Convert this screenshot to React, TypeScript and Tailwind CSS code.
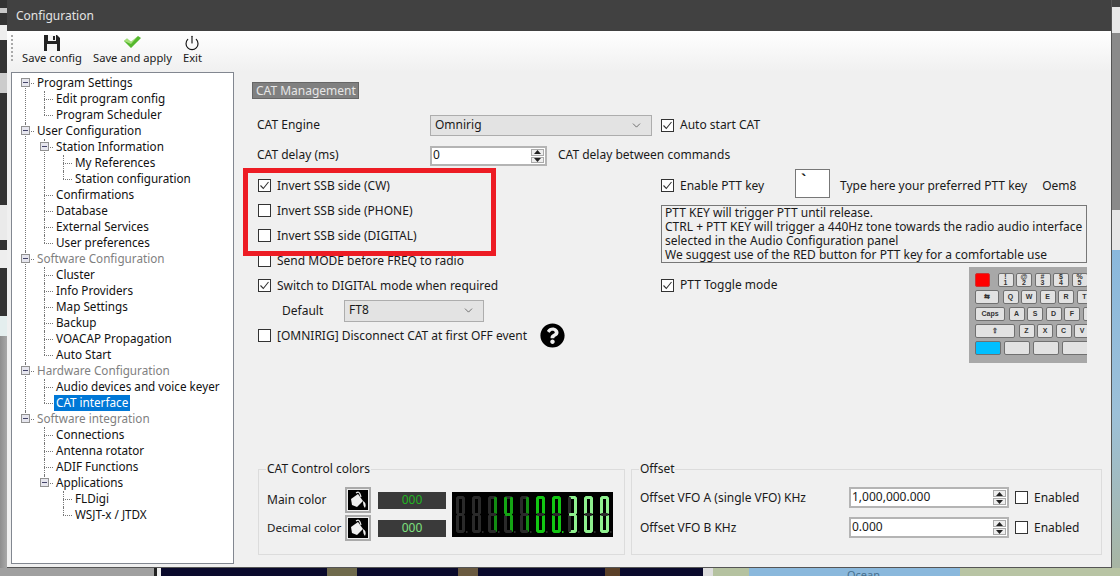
import { ChevronDown, Power } from 'lucide-react';
import { FaQuestionCircle } from 'react-icons/fa';

interface TreeItem {
  label: string;
  muted?: boolean;
  selected?: boolean;
  children?: TreeItem[];
}

const tree: TreeItem[] = [
  {
    label: 'Program Settings',
    children: [{ label: 'Edit program config' }, { label: 'Program Scheduler' }],
  },
  {
    label: 'User Configuration',
    children: [
      {
        label: 'Station Information',
        children: [{ label: 'My References' }, { label: 'Station configuration' }],
      },
      { label: 'Confirmations' },
      { label: 'Database' },
      { label: 'External Services' },
      { label: 'User preferences' },
    ],
  },
  {
    label: 'Software Configuration',
    muted: true,
    children: [
      { label: 'Cluster' },
      { label: 'Info Providers' },
      { label: 'Map Settings' },
      { label: 'Backup' },
      { label: 'VOACAP Propagation' },
      { label: 'Auto Start' },
    ],
  },
  {
    label: 'Hardware Configuration',
    muted: true,
    children: [{ label: 'Audio devices and voice keyer' }, { label: 'CAT interface', selected: true }],
  },
  {
    label: 'Software integration',
    muted: true,
    children: [
      { label: 'Connections' },
      { label: 'Antenna rotator' },
      { label: 'ADIF Functions' },
      {
        label: 'Applications',
        children: [{ label: 'FLDigi' }, { label: 'WSJT-x / JTDX' }],
      },
    ],
  },
];

function TreeNode({ item, first, last }: { item: TreeItem; first?: boolean; last?: boolean }) {
  return (
    <div className="relative">
      <span
        className={`absolute left-[13px] border-l border-dotted border-[#777] ${first ? 'top-2' : 'top-0'} ${last ? 'h-2' : 'bottom-0'}`}
      />
      <div className="relative flex h-4 items-center">
        <span className="absolute left-[13px] top-2 w-[9px] border-t border-dotted border-[#777]" />
        {item.children && (
          <span className="absolute left-[9px] top-[3px] z-10 flex size-[9px] items-center justify-center border border-[#919191] bg-[#e6e6ee]">
            <span className="h-px w-[5px] bg-[#45456a]" />
          </span>
        )}
        <span
          className={`relative ml-[23px] px-[2px] pb-[2px] leading-[14px] ${item.selected ? 'bg-[#0078d7] text-white' : item.muted ? 'text-[#7f7f7f]' : 'text-[#111]'}`}
        >
          {item.label}
        </span>
      </div>
      {item.children && (
        <div className="ml-[19px]">
          {item.children.map((child, i) => (
            <TreeNode key={child.label} item={child} last={i === item.children!.length - 1} />
          ))}
        </div>
      )}
    </div>
  );
}

function Checkbox({ checked }: { checked?: boolean }) {
  return (
    <span className="flex size-[13px] shrink-0 items-center justify-center border border-[#333] bg-white">
      {checked && (
        <svg width="11" height="11" viewBox="0 0 11 11" fill="none">
          <path d="M1.5 5.5 L4.3 8.5 L9.5 2" stroke="#333" strokeWidth="1.1" />
        </svg>
      )}
    </span>
  );
}

function CheckRow({ label, checked }: { label: string; checked?: boolean }) {
  return (
    <div className="flex h-[25px] items-center gap-[6px] pl-[6px]">
      <Checkbox checked={checked} />
      <span className="whitespace-nowrap">{label}</span>
    </div>
  );
}

function SpinBox({ value, className }: { value: string; className: string }) {
  return (
    <div className={`flex shrink-0 items-center border-2 border-[#b4b4b4] bg-white pl-[1px] ${className}`}>
      <span className="flex-1 pb-[2px]">{value}</span>
      <div className="mr-[1px] flex h-full flex-col justify-center gap-[1px] py-[1px]">
        <span className="flex h-[7px] w-[13px] items-center justify-center border border-[#aaa] bg-[#eee]">
          <svg width="7" height="4" viewBox="0 0 7 4">
            <path d="M3.5 0 L7 4 L0 4 Z" fill="#222" />
          </svg>
        </span>
        <span className="flex h-[7px] w-[13px] items-center justify-center border border-[#aaa] bg-[#eee]">
          <svg width="7" height="4" viewBox="0 0 7 4">
            <path d="M0 0 L7 0 L3.5 4 Z" fill="#222" />
          </svg>
        </span>
      </div>
    </div>
  );
}

function ComboBox({ value, className }: { value: string; className: string }) {
  return (
    <div className={`flex shrink-0 items-center justify-between border border-[#adadad] bg-[#e3e3e3] pl-1 pr-2 ${className}`}>
      <span className="pb-[2px]">{value}</span>
      <ChevronDown size={13} strokeWidth={1.1} color="#222" />
    </div>
  );
}

function BucketButton() {
  return (
    <span className="flex size-[26px] shrink-0 items-center justify-center border-2 border-[#aaa] bg-[#eee]">
      <svg width="20" height="20" viewBox="0 0 20 20">
        <rect width="20" height="20" fill="#000" />
        <path d="M3 9 L10 4 L15 11 L9 17 L4 15 Z" fill="#eee" />
        <path d="M8 3 Q11 1 12 4 L13 7" fill="none" stroke="#eee" strokeWidth="1.2" />
        <path d="M15 11 Q19 13 17 18 Q15 16 15 11 Z" fill="#eee" />
      </svg>
    </span>
  );
}

const segments: Record<string, string> = {
  '0': 'abcdef',
  '1': 'bc',
  '3': 'abcdg',
  '4': 'bcfg',
  ' ': '',
};

const displayDigits: { ch: string; color: string }[] = [
  { ch: ' ', color: '#2a2a2a' },
  { ch: ' ', color: '#2a2a2a' },
  { ch: '1', color: '#128c12' },
  { ch: '4', color: '#14a514' },
  { ch: '1', color: '#128c12' },
  { ch: '0', color: '#12c512' },
  { ch: '0', color: '#12c512' },
  { ch: '3', color: '#8ff08f' },
  { ch: '0', color: '#8ff08f' },
  { ch: '0', color: '#8ff08f' },
];

function SegmentDisplay() {
  const rects: Record<string, [number, number, number, number]> = {
    a: [1, 0, 7, 3],
    b: [6, 1, 3, 17],
    c: [6, 19, 3, 17],
    d: [1, 34, 7, 3],
    e: [0, 19, 3, 17],
    f: [0, 1, 3, 17],
    g: [1, 17, 7, 3],
  };
  return (
    <svg width="161" height="45" viewBox="0 0 161 45" className="shrink-0 bg-black">
      {displayDigits.map((d, i) => (
        <g key={i} transform={`translate(${4 + i * 16} 4)`}>
          {Object.entries(rects).map(([name, [x, y, w, h]]) => (
            <rect
              key={name}
              x={x}
              y={y}
              width={w}
              height={h}
              rx="1"
              fill={segments[d.ch].includes(name) ? d.color : '#2a2a2a'}
            />
          ))}
          <rect x="10" y="35" width="1.5" height="2" fill={i === 6 ? d.color : '#2a2a2a'} />
        </g>
      ))}
    </svg>
  );
}

function Key({ className = 'w-4', label, sub, color }: { className?: string; label?: string; sub?: string; color?: string }) {
  return (
    <span
      className={`flex h-[14px] shrink-0 flex-col items-center justify-center rounded-[2px] border border-[#707070] text-[7px] font-bold leading-[6px] text-[#333] ${className} ${color ?? 'bg-[#e2e2e2]'}`}
    >
      <span>{label}</span>
      {sub && <span>{sub}</span>}
    </span>
  );
}

function Keyboard() {
  return (
    <div
      className="flex h-[96px] w-[118px] flex-col gap-[3px] overflow-hidden bg-[#a8a8a8] pl-[6px] pt-[6px]"
      style={{ fontFamily: '"Liberation Sans", sans-serif' }}
    >
      <div className="flex gap-[2.5px]">
        <Key className="mr-[5px] w-[15px] border-[#c33]" color="bg-[#ff0000]" />
        <Key label="!" sub="1" />
        <Key label="@" sub="2" />
        <Key label="#" sub="3" />
        <Key label="$" sub="4" />
        <Key label="%" sub="5" />
      </div>
      <div className="flex gap-[2.5px]">
        <Key className="mr-[1px] w-[24px]" label="⇆" />
        <Key label="Q" />
        <Key label="W" />
        <Key label="E" />
        <Key label="R" />
        <Key label="T" />
      </div>
      <div className="flex gap-[2.5px]">
        <Key className="mr-[1px] w-[30px]" label="Caps" />
        <Key label="A" />
        <Key label="S" />
        <Key label="D" />
        <Key label="F" />
        <Key />
      </div>
      <div className="flex gap-[2.5px]">
        <Key className="mr-[1px] w-[40px]" label="⇧" />
        <Key label="Z" />
        <Key label="X" />
        <Key label="C" />
        <Key label="V" />
      </div>
      <div className="flex gap-[3px]">
        <Key className="w-[26px] border-[#4a9ec0]" color="bg-[#00bfff]" />
        <Key className="w-[26px]" />
        <Key className="w-[26px]" />
        <Key className="w-[50px]" />
      </div>
    </div>
  );
}

function Desktop() {
  return (
    <>
      <div className="absolute inset-y-0 left-0 flex w-[7px] flex-col">
        <div className="h-[8px] bg-[#333]" />
        <div className="h-[5px] bg-[#c8c8c8]" />
        <div className="h-[12px] bg-[#333]" />
        <div className="h-[15px] bg-[#eee]" />
        <div className="h-[33px] bg-[#333]" />
        <div className="h-[20px] bg-[#ccc]" />
        <div className="h-[112px] bg-[#333]" />
        <div className="h-[35px] bg-[#eaeaea]" />
        <div className="h-[10px] bg-[#333]" />
        <div className="h-[18px] bg-[#eee]" />
        <div className="h-[48px] bg-[#333]" />
        <div className="h-[20px] bg-[#e4eeee]" />
        <div className="flex-1 bg-gradient-to-r from-[#8e8e8e] to-[#a8a8a8]" />
      </div>
      <div className="absolute inset-y-0 right-0 flex w-[8px] flex-col">
        <div className="h-[7px] bg-[#444]" />
        <div className="h-[26px] bg-[#e8e8e8]" />
        <div className="h-[177px] bg-[#8a8a8a]" />
        <div className="h-[40px] bg-[#e6e6e6]" />
        <div className="flex-1 bg-gradient-to-b from-[#8ab8dc] via-[#9cc0d8] to-[#a8b4a0]" />
      </div>
      <div className="absolute inset-x-0 bottom-0 flex h-2">
        <div className="w-[154px] bg-[#a0a0a0]" />
        <div className="w-[3px] bg-[#222]" />
        <div className="w-[4px] bg-[#eee]" />
        <div className="flex w-[542px] bg-[#0a0a2c]">
          <div className="ml-[166px] w-[30px] bg-[#6f6a4c]" />
          <div className="ml-[101px] w-[20px] bg-[#6a5a40]" />
          <div className="ml-[127px] w-[15px] bg-[#5a4028]" />
        </div>
        <div className="w-[10px] bg-[#ddd]" />
        <div className="w-[36px] bg-[#b5c2a0]" />
        <div className="w-[211px] bg-[#8ab8dc] pl-[98px] text-[11px] leading-[14px] text-[#46708f]">
          Ocean
        </div>
        <div className="flex-1 bg-[#b8c4a4]" />
      </div>
    </>
  );
}

export default function App() {
  return (
    <div
      className="relative h-[576px] w-[1120px] overflow-hidden bg-[#333] text-[12px] text-[#1a1a1a]"
      style={{ fontFamily: '"Noto Sans", sans-serif' }}
    >
      <Desktop />
      <div className="absolute left-[7px] top-0 flex h-[568px] w-[1105px] flex-col border-r border-b border-[#555] bg-[#f0f0f0]">
        {/* Title bar */}
        <div className="flex h-[31px] shrink-0 items-center bg-[#414141] pl-[9px] text-[#e4e4e4]">Configuration</div>

        {/* Toolbar */}
        <div className="flex h-[41px] shrink-0 bg-gradient-to-b from-white to-[#f0f0f0] text-[11.2px]">
          <span className="ml-[4px] mt-[4px] h-[26px] border-l-2 border-dotted border-[#aaa]" />
          <div className="ml-[9px] flex gap-[11px] pt-[4px] leading-[14px]">
            <div className="flex flex-col items-center">
              <svg width="16" height="16" viewBox="0 0 16 16">
                <path d="M0 0 H13 L16 3 V16 H0 Z" fill="#222" />
                <rect x="4" y="0" width="8" height="6" fill="#f4f4f4" />
                <rect x="9" y="1" width="2" height="4" fill="#222" />
                <rect x="3" y="9" width="10" height="7" fill="#f4f4f4" />
              </svg>
              <span>Save config</span>
            </div>
            <div className="flex flex-col items-center">
              <svg width="17" height="16" viewBox="0 0 17 16">
                <path d="M0 6 L3 3.5 L7 7 L14 1 L17 3 L7 13 Z" fill="#55b82e" />
                <path d="M0 6 L3 3.5 L7 7 L14 1 L7 9 Z" fill="#a6e07a" />
              </svg>
              <span>Save and apply</span>
            </div>
            <div className="flex flex-col items-center">
              <Power size={16} strokeWidth={1.7} color="#111" />
              <span>Exit</span>
            </div>
          </div>
        </div>

        <div className="flex min-h-0 flex-1">
          {/* Tree */}
          <aside className="ml-[4px] mb-[3px] w-[223px] shrink-0 border border-[#828790] bg-white pt-[2px] text-[11.7px]">
            {tree.map((item, i) => (
              <TreeNode key={item.label} item={item} first={i === 0} last={i === tree.length - 1} />
            ))}
          </aside>

          {/* Panel */}
          <main className="flex min-w-0 flex-1 flex-col pl-[18px]">
            <div className="mt-[10px] flex h-[17px] w-[107px] items-center border border-[#666] bg-[#808080] pl-[3px] text-[#e6e6e6]">
              CAT Management
            </div>

            <div className="mt-[16px] flex">
              <div className="w-[409px] shrink-0">
                <div className="flex h-[21px] items-center pl-[5px]">
                  <span className="w-[173px] shrink-0 pb-[2px]">CAT Engine</span>
                  <ComboBox value="Omnirig" className="h-[21px] w-[222px]" />
                </div>
                <div className="mt-[10px] flex h-[20px] items-center pl-[5px]">
                  <span className="w-[173px] shrink-0 pb-[2px]">CAT delay (ms)</span>
                  <SpinBox value="0" className="h-[20px] w-[117px]" />
                  <span className="ml-[11px] whitespace-nowrap pb-[2px]">CAT delay between commands</span>
                </div>
                <div className="relative mt-[7px]">
                  <CheckRow label="Invert SSB side (CW)" checked />
                  <CheckRow label="Invert SSB side (PHONE)" />
                  <CheckRow label="Invert SSB side (DIGITAL)" />
                  <span className="absolute -bottom-[8px] -left-[9px] -top-[5px] w-[253px] border-[5px] border-[#ed1c24]" />
                </div>
                <CheckRow label="Send MODE before FREQ to radio" />
                <CheckRow label="Switch to DIGITAL mode when required" checked />
                <div className="flex h-[25px] items-center pl-[30px]">
                  <span className="w-[62px] shrink-0">Default</span>
                  <ComboBox value="FT8" className="h-[22px] w-[140px]" />
                </div>
                <div className="flex h-[25px] items-center">
                  <CheckRow label="[OMNIRIG] Disconnect CAT at first OFF event" />
                  <FaQuestionCircle size={25} color="#000" className="ml-[13px]" />
                </div>
              </div>

              <div className="w-[426px] shrink-0">
                <div className="flex h-[21px] items-center gap-[6px]">
                  <Checkbox checked />
                  <span className="pb-[2px]">Auto start CAT</span>
                </div>
                <div className="mt-[33px] flex h-[29px] items-center pt-[4px]">
                  <Checkbox checked />
                  <span className="ml-[6px] w-[115px] shrink-0">Enable PTT key</span>
                  <span className="-mt-[4px] h-[29px] w-[35px] shrink-0 border border-[#777] bg-white pl-[5px] pt-[3px] text-[14px] font-bold leading-[14px]">`</span>
                  <span className="ml-[10px] whitespace-nowrap">Type here your preferred PTT key</span>
                  <span className="ml-[15px]">Oem8</span>
                </div>
                <div className="mt-[7px] h-[58px] border border-[#777] px-[3px] leading-[14px]">
                  <p>PTT KEY will trigger PTT until release.</p>
                  <p className="whitespace-nowrap">CTRL + PTT KEY will trigger a 440Hz tone towards the radio audio interface</p>
                  <p>selected in the Audio Configuration panel</p>
                  <p>We suggest use of the RED button for PTT key for a comfortable use</p>
                </div>
                <div className="mt-[4px] flex items-start justify-between">
                  <div className="mt-[9px] flex items-center gap-[6px]">
                    <Checkbox checked />
                    <span>PTT Toggle mode</span>
                  </div>
                  <Keyboard />
                </div>
              </div>
            </div>

            {/* Group boxes */}
            <div className="mb-[12px] mt-auto flex gap-[6px] pl-[6px]">
              <fieldset className="h-[94px] w-[367px] border border-[#dcdcdc] pl-2">
                <legend className="-ml-[1px] px-[1px] leading-4">CAT Control colors</legend>
                <div className="mt-[10px] flex items-center">
                  <div className="flex flex-col gap-[2px]">
                    <div className="flex items-center">
                      <span className="w-[78px] shrink-0 whitespace-nowrap">Main color</span>
                      <BucketButton />
                      <span className="ml-[7px] flex h-[17px] w-[68px] items-center justify-center bg-[#3a3a3a] text-[#22b522]">000</span>
                    </div>
                    <div className="flex items-center">
                      <span className="w-[78px] shrink-0 whitespace-nowrap text-[11.6px]">Decimal color</span>
                      <BucketButton />
                      <span className="ml-[7px] flex h-[17px] w-[68px] items-center justify-center bg-[#3a3a3a] text-[#7ee07e]">000</span>
                    </div>
                  </div>
                  <div className="ml-[6px]">
                    <SegmentDisplay />
                  </div>
                </div>
              </fieldset>
              <fieldset className="h-[94px] w-[471px] border border-[#dcdcdc] pl-2">
                <legend className="-ml-[1px] px-[1px] leading-4">Offset</legend>
                <div className="mt-[10px] flex flex-col gap-[9px]">
                  <div className="flex h-[21px] items-center">
                    <span className="w-[209px] shrink-0">Offset VFO A (single VFO) KHz</span>
                    <SpinBox value="1,000,000.000" className="h-[21px] w-[160px]" />
                    <span className="ml-[6px]"><Checkbox /></span>
                    <span className="ml-[6px]">Enabled</span>
                  </div>
                  <div className="flex h-[21px] items-center">
                    <span className="w-[209px] shrink-0">Offset VFO B KHz</span>
                    <SpinBox value="0.000" className="h-[21px] w-[160px]" />
                    <span className="ml-[6px]"><Checkbox /></span>
                    <span className="ml-[6px]">Enabled</span>
                  </div>
                </div>
              </fieldset>
            </div>
          </main>
        </div>
      </div>
    </div>
  );
}
